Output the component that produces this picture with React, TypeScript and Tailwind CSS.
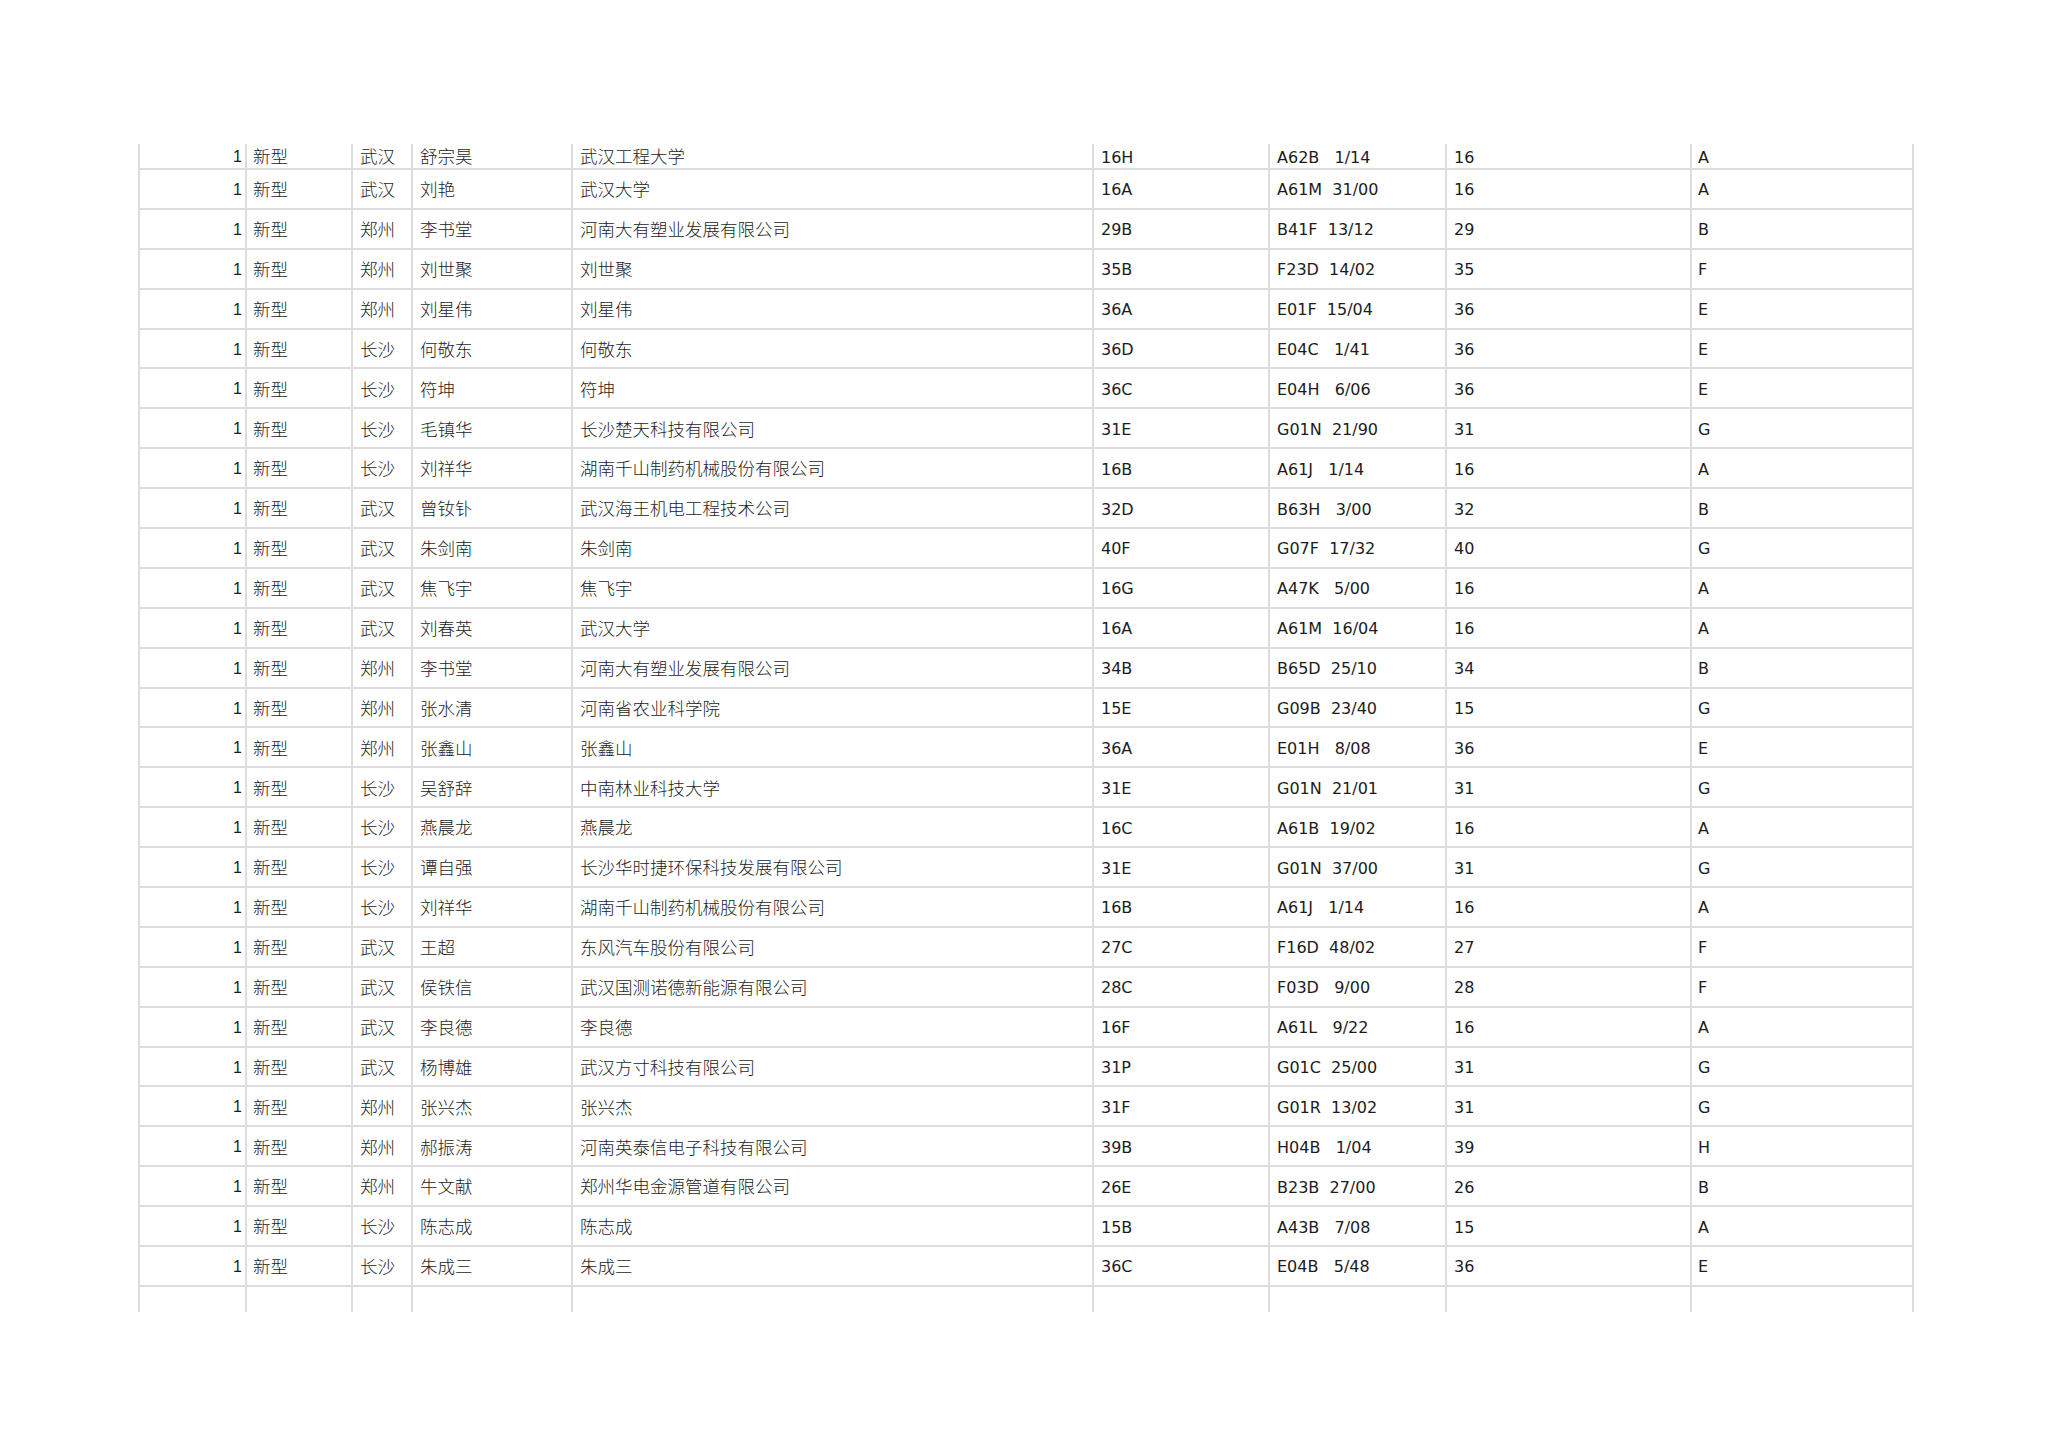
import React from "react";

type Row = [string, string, string, string, string, string, string];

const rows: Row[] = [
  ["武汉", "舒宗昊", "武汉工程大学", "16H", "A62B   1/14", "16", "A"],
  ["武汉", "刘艳", "武汉大学", "16A", "A61M  31/00", "16", "A"],
  ["郑州", "李书堂", "河南大有塑业发展有限公司", "29B", "B41F  13/12", "29", "B"],
  ["郑州", "刘世聚", "刘世聚", "35B", "F23D  14/02", "35", "F"],
  ["郑州", "刘星伟", "刘星伟", "36A", "E01F  15/04", "36", "E"],
  ["长沙", "何敬东", "何敬东", "36D", "E04C   1/41", "36", "E"],
  ["长沙", "符坤", "符坤", "36C", "E04H   6/06", "36", "E"],
  ["长沙", "毛镇华", "长沙楚天科技有限公司", "31E", "G01N  21/90", "31", "G"],
  ["长沙", "刘祥华", "湖南千山制药机械股份有限公司", "16B", "A61J   1/14", "16", "A"],
  ["武汉", "曾钕钋", "武汉海王机电工程技术公司", "32D", "B63H   3/00", "32", "B"],
  ["武汉", "朱剑南", "朱剑南", "40F", "G07F  17/32", "40", "G"],
  ["武汉", "焦飞宇", "焦飞宇", "16G", "A47K   5/00", "16", "A"],
  ["武汉", "刘春英", "武汉大学", "16A", "A61M  16/04", "16", "A"],
  ["郑州", "李书堂", "河南大有塑业发展有限公司", "34B", "B65D  25/10", "34", "B"],
  ["郑州", "张水清", "河南省农业科学院", "15E", "G09B  23/40", "15", "G"],
  ["郑州", "张鑫山", "张鑫山", "36A", "E01H   8/08", "36", "E"],
  ["长沙", "吴舒辞", "中南林业科技大学", "31E", "G01N  21/01", "31", "G"],
  ["长沙", "燕晨龙", "燕晨龙", "16C", "A61B  19/02", "16", "A"],
  ["长沙", "谭自强", "长沙华时捷环保科技发展有限公司", "31E", "G01N  37/00", "31", "G"],
  ["长沙", "刘祥华", "湖南千山制药机械股份有限公司", "16B", "A61J   1/14", "16", "A"],
  ["武汉", "王超", "东风汽车股份有限公司", "27C", "F16D  48/02", "27", "F"],
  ["武汉", "侯铁信", "武汉国测诺德新能源有限公司", "28C", "F03D   9/00", "28", "F"],
  ["武汉", "李良德", "李良德", "16F", "A61L   9/22", "16", "A"],
  ["武汉", "杨博雄", "武汉方寸科技有限公司", "31P", "G01C  25/00", "31", "G"],
  ["郑州", "张兴杰", "张兴杰", "31F", "G01R  13/02", "31", "G"],
  ["郑州", "郝振涛", "河南英泰信电子科技有限公司", "39B", "H04B   1/04", "39", "H"],
  ["郑州", "牛文献", "郑州华电金源管道有限公司", "26E", "B23B  27/00", "26", "B"],
  ["长沙", "陈志成", "陈志成", "15B", "A43B   7/08", "15", "A"],
  ["长沙", "朱成三", "朱成三", "36C", "E04B   5/48", "36", "E"],
];

const cjk = "font-['Noto_Sans_CJK_SC',sans-serif] font-light text-[17.5px] leading-none";
const lat = "font-['DejaVu_Sans',sans-serif] text-[16px] leading-none whitespace-pre pt-[3px]";
const cell = "flex items-center border-r-2 border-[#dddddd] shrink-0";

function DataRow({ r, h, last }: { r?: Row; h: string; last?: boolean }) {
  const bb = last ? "" : "border-b-2 border-b-[#dddddd]";
  return (
    <div className={`flex ${h} text-[#1c1c1c]`}>
      <div className={`${cell} ${bb} w-[109px] border-l-2 border-l-[#dddddd] justify-end pr-[3px] pt-[2px] font-['Liberation_Sans',sans-serif] text-[16px] leading-none`}>
        {r ? "1" : ""}
      </div>
      <div className={`${cell} ${bb} w-[106px] pl-[6px] ${cjk}`}>{r ? "新型" : ""}</div>
      <div className={`${cell} ${bb} w-[60px] pl-[7px] ${cjk}`}>{r ? r[0] : ""}</div>
      <div className={`${cell} ${bb} w-[160px] pl-[7px] ${cjk}`}>{r ? r[1] : ""}</div>
      <div className={`${cell} ${bb} w-[521px] pl-[7px] ${cjk}`}>{r ? r[2] : ""}</div>
      <div className={`${cell} ${bb} w-[176px] pl-[7px] ${lat}`}>{r ? r[3] : ""}</div>
      <div className={`${cell} ${bb} w-[177px] pl-[7px] ${lat}`}>{r ? r[4] : ""}</div>
      <div className={`${cell} ${bb} w-[245px] pl-[7px] ${lat}`}>{r ? r[5] : ""}</div>
      <div className={`${cell} ${bb} w-[222px] pl-[6px] ${lat}`}>{r ? r[6] : ""}</div>
    </div>
  );
}

export default function App() {
  return (
    <div className="w-[2048px] h-[1447px] bg-white overflow-hidden">
      <div className="pt-[144px] pl-[138px] flex flex-col">
        {rows.map((r, i) => (
          <DataRow key={i} r={r} h={i === 0 ? "h-[26px]" : "h-[39.9px]"} />
        ))}
        <DataRow h="h-[25px]" last />
      </div>
    </div>
  );
}
